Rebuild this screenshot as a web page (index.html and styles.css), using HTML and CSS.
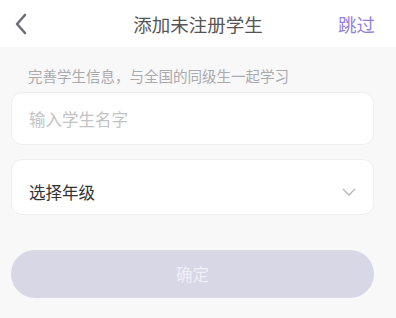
FILE: index.html
```html
<!DOCTYPE html>
<html lang="zh-CN">
<head>
    <meta charset="UTF-8">
    <meta name="viewport" content="width=device-width, initial-scale=1.0">
    <title>添加未注册学生</title>
    <link rel="stylesheet" href="styles.css">
</head>
<body>
    <div class="nav-bar">
        <div class="nav-back">
            <svg width="14" height="22" viewBox="0 0 14 22">
                <path d="M11 2 L3 11 L11 20" fill="none" stroke="#6d6d78" stroke-width="2.6" stroke-linecap="round" stroke-linejoin="round"/>
            </svg>
        </div>
        <div class="nav-title">添加未注册学生</div>
        <div class="nav-skip">跳过</div>
    </div>

    <div class="content">
        <div class="tip">完善学生信息，与全国的同级生一起学习</div>

        <div class="card">
            <input class="name-input" type="text" placeholder="输入学生名字">
        </div>

        <div class="card grade-select">
            <span>选择年级</span>
            <svg width="14" height="8" viewBox="0 0 14 8">
                <path d="M1 1 L7 7 L13 1" fill="none" stroke="#b5b5b8" stroke-width="1.3"/>
            </svg>
        </div>

        <button class="submit-btn">确定</button>
    </div>
</body>
</html>
```

FILE: styles.css
```css
body {
    margin: 0;
    padding: 0;
    background: #f8f8f9;
    font-family: "Noto Sans CJK SC", "Noto Sans", sans-serif;
    color: #333;
}

.nav-bar {
    height: 47px;
    background: #fff;
    display: flex;
    align-items: center;
    justify-content: space-between;
    padding: 0 21px 0 14px;
    position: relative;
}

.nav-back {
    display: flex;
    align-items: center;
    width: 40px;
}

.nav-title {
    position: absolute;
    left: 0;
    right: 0;
    text-align: center;
    font-size: 18.5px;
    color: #555;
    pointer-events: none;
}

.nav-skip {
    font-size: 18.5px;
    color: #9382d8;
}

.content {
    padding: 18px 22px 0 11px;
}

.tip {
    font-size: 14.5px;
    line-height: 22px;
    color: #aaaaae;
    padding-left: 17px;
    margin-bottom: 5px;
}

.card {
    background: #fff;
    border: 1px solid #eeeef0;
    border-radius: 11px;
    height: 53px;
    box-sizing: border-box;
    display: flex;
    align-items: center;
    padding: 0 17px 0 17px;
    margin-bottom: 14px;
}

.name-input {
    border: none;
    outline: none;
    width: 100%;
    font-family: inherit;
    font-size: 16.5px;
    color: #333;
    background: transparent;
    padding: 0;
}

.name-input::placeholder {
    color: #c3c3c6;
}

.grade-select {
    height: 56px;
    padding-top: 10px;
    justify-content: space-between;
    font-size: 16.5px;
    color: #333;
}

.submit-btn {
    display: block;
    width: 100%;
    height: 48px;
    margin-top: 35px;
    border: none;
    border-radius: 24px;
    background: #d8d7e6;
    color: #efeff6;
    font-family: inherit;
    font-size: 16.5px;
}
```
